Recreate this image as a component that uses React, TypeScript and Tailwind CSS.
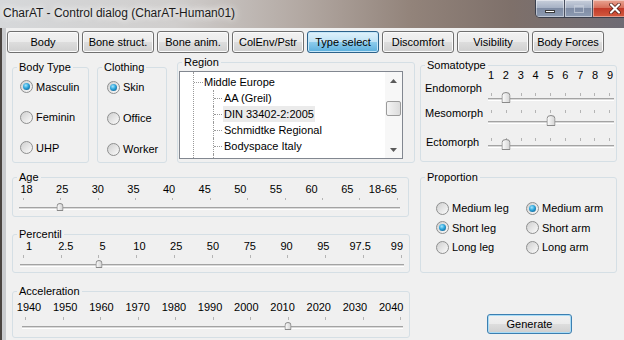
import React from 'react'

const tabs = ['Body', 'Bone struct.', 'Bone anim.', 'ColEnv/Pstr', 'Type select', 'Discomfort', 'Visibility', 'Body Forces']

const treeItems = ['AA (Greil)', 'DIN 33402-2:2005', 'Schmidtke Regional', 'Bodyspace Italy', 'DIN 33402 Italy']

function Radio({ checked }: { checked?: boolean }) {
  return (
    <span className="flex h-[13px] w-[13px] shrink-0 items-center justify-center rounded-full border border-[#8e8f8f] bg-[linear-gradient(135deg,#cfcfcf,#fbfbfb)]">
      {checked && (
        <span className="h-[7px] w-[7px] rounded-full bg-[radial-gradient(circle_at_40%_35%,#a6e6fc_0%,#2aa3da_45%,#0c4a78_100%)]" />
      )}
    </span>
  )
}

function RadioItem({ label, checked, className = '' }: { label: string; checked?: boolean; className?: string }) {
  return (
    <div className={'flex h-[14px] items-center gap-[3px] leading-[14px] ' + className}>
      <Radio checked={checked} />
      <span>{label}</span>
    </div>
  )
}

function Group({
  title,
  className,
  legend = 'leading-[12px]',
  children,
}: {
  title: string
  className: string
  legend?: string
  children?: React.ReactNode
}) {
  return (
    <fieldset className={'rounded-[3px] border border-[#d5dfe5] ' + className}>
      <legend className={'ml-[4px] px-[2px] ' + legend}>{title}</legend>
      {children}
    </fieldset>
  )
}

function Thumb({ big }: { big?: boolean }) {
  if (big) {
    return (
      <svg width="9" height="11" viewBox="0 0 9 11">
        <defs>
          <linearGradient id="tb" x1="0" x2="1" y1="0" y2="0">
            <stop offset="0" stopColor="#fdfdfd" />
            <stop offset="1" stopColor="#d4d4d4" />
          </linearGradient>
        </defs>
        <path d="M0.5 10.5V3.5Q0.5 0.5 4.5 0.5Q8.5 0.5 8.5 3.5V10.5Z" fill="url(#tb)" stroke="#8a8a8a" />
      </svg>
    )
  }
  return (
    <svg width="7" height="8" viewBox="0 0 7 8">
      <defs>
        <linearGradient id="ts" x1="0" x2="1" y1="0" y2="0">
          <stop offset="0" stopColor="#fdfdfd" />
          <stop offset="1" stopColor="#d0d0d0" />
        </linearGradient>
      </defs>
      <path d="M0.5 7.5V3Q0.5 0.5 3.5 0.5Q6.5 0.5 6.5 3V7.5Z" fill="url(#ts)" stroke="#8a8a8a" />
    </svg>
  )
}

function Labels({ items, className }: { items: string[]; className: string }) {
  return (
    <div className={'flex justify-between ' + className}>
      {items.map((t) => (
        <div key={t} className="flex w-0 justify-center whitespace-nowrap">
          {t}
        </div>
      ))}
    </div>
  )
}

function Trackbar(props: {
  count: number
  value: number
  className: string
  tickH: string
  trackClass: string
  thumbClass: string
  big?: boolean
}) {
  const ticks = Array.from({ length: props.count })
  return (
    <div className={'relative ' + props.className}>
      <div className={'flex justify-between ' + props.tickH}>
        {ticks.map((_, i) => (
          <div key={i} className="h-full w-px bg-[#b4b4b4]" />
        ))}
      </div>
      <div className={'h-[3px] border-t border-b border-t-[#a3a3a3] border-b-white bg-[#dadada] ' + props.trackClass} />
      <div
        className={'absolute flex -translate-x-1/2 ' + props.thumbClass}
        style={{ left: `${(props.value / (props.count - 1)) * 100}%` }}
      >
        <Thumb big={props.big} />
      </div>
    </div>
  )
}

function WinButton({ label, active }: { label: string; active?: boolean }) {
  return (
    <div
      className={
        'flex h-[22px] w-[72px] items-center justify-center rounded-[3px] border leading-[14px] ' +
        (active
          ? 'border-[#2c628b] bg-[linear-gradient(#e0f2fb_0%,#bfe2f5_48%,#8ccbec_52%,#5aaedc_100%)] shadow-[inset_0_0_0_1px_#c5e7f9]'
          : 'border-[#707070] bg-[linear-gradient(#f2f2f2_0%,#ebebeb_48%,#dddddd_52%,#cfcfcf_100%)] shadow-[inset_0_0_0_1px_#fbfbfb]')
      }
    >
      {label}
    </div>
  )
}

export default function App() {
  return (
    <div className="flex h-[340px] w-[624px] flex-col overflow-hidden bg-[#f0f0f0] font-['Liberation_Sans',Arial,sans-serif] text-[11px] text-black">
      {/* title bar */}
      <div className="flex h-[28px] shrink-0 bg-[linear-gradient(90deg,#d6d8da_0%,#d0cecd_28%,#b3a9a3_48%,#92837a_66%,#7e706a_82%,#6e6b74_100%)]">
        <div className="pl-[3px] pt-[6px] text-[12px] leading-[14px] text-[#1b1b1b] [text-shadow:0_0_6px_#fff,0_0_10px_#fff]">
          CharAT - Control dialog (CharAT-Human01)
        </div>
        <div className="-mr-[13px] ml-auto flex h-[18px] overflow-hidden rounded-bl-[5px] rounded-br-[5px] border border-t-0 border-[#3a3f4c]">
          <div className="flex w-[29px] items-center justify-center border-r border-[#4a5060] bg-[linear-gradient(#c8cfdb_0%,#a7b2c5_45%,#7f8ca4_50%,#8d9bb2_100%)] shadow-[inset_0_0_0_1px_rgba(255,255,255,0.45)]">
            <div className="mt-[5px] h-[3px] w-[10px] border border-[#3b3b3b] bg-white" />
          </div>
          <div className="flex w-[28px] items-center justify-center border-r border-[#4a5060] bg-[linear-gradient(#c8cfdb_0%,#a7b2c5_45%,#7f8ca4_50%,#8d9bb2_100%)] shadow-[inset_0_0_0_1px_rgba(255,255,255,0.45)]">
            <div className="h-[8px] w-[10px] border border-t-2 border-[#c9d0db] opacity-70" />
          </div>
          <div className="flex w-[43px] items-center justify-center bg-[linear-gradient(#e9a493_0%,#d7705c_45%,#c23b2a_50%,#d45a3f_100%)] shadow-[inset_0_0_0_1px_rgba(255,255,255,0.4)]">
            <svg width="12" height="11" viewBox="0 0 12 11">
              <path d="M2 1.5L10 9.5M10 1.5L2 9.5" stroke="#4a1a12" strokeWidth="3.6" strokeLinecap="round" />
              <path d="M2 1.5L10 9.5M10 1.5L2 9.5" stroke="#fff" strokeWidth="2.2" strokeLinecap="round" />
            </svg>
          </div>
        </div>
      </div>

      <div className="flex flex-1">
        {/* left window frame */}
        <div className="w-[6px] shrink-0 border-l-2 border-[#4a4440] bg-[#c9cbce]" />

        {/* client area */}
        <div className="flex-1">
          <div className="ml-[1px] mt-[3px] flex gap-[3px]">
            {tabs.map((t) => (
              <WinButton key={t} label={t} active={t === 'Type select'} />
            ))}
          </div>

          <div className="ml-[6px] mt-[2px] flex">
            {/* left column */}
            <div className="w-[403px]">
              <div className="flex items-start">
                <Group title="Body Type" className="mt-[6px] h-[102px] w-[77px]">
                  <RadioItem label="Masculin" checked className="ml-[7px] mt-[6.5px]" />
                  <RadioItem label="Feminin" className="ml-[7px] mt-[16.5px]" />
                  <RadioItem label="UHP" className="ml-[7px] mt-[16.5px]" />
                </Group>
                <Group title="Clothing" className="ml-[8px] mt-[6px] h-[102px] w-[70px]">
                  <RadioItem label="Skin" checked className="ml-[9px] mt-[7px]" />
                  <RadioItem label="Office" className="ml-[9px] mt-[17px]" />
                  <RadioItem label="Worker" className="ml-[9px] mt-[17px]" />
                </Group>
                <Group title="Region" className="ml-[10px] mt-[1px] h-[107px] w-[238px]">
                  <div className="ml-[1px] mt-[3px] flex h-[88px] w-[224px] border border-[#828790] bg-white">
                    <div className="flex-1 overflow-hidden">
                      <div className="ml-[13px] h-full border-l border-dotted border-[#9a9a9a] pt-[2px]">
                        <div className="flex h-[16px] items-center">
                          <div className="w-[9px] border-t border-dotted border-[#9a9a9a]" />
                          <span className="ml-[1px] leading-[14px]">Middle Europe</span>
                        </div>
                        {treeItems.map((t) => (
                          <div key={t} className="ml-[19px] flex h-[16px] items-center border-l border-dotted border-[#9a9a9a]">
                            <div className="w-[8px] border-t border-dotted border-[#9a9a9a]" />
                            <span
                              className={
                                'ml-[1px] h-[16px] whitespace-nowrap px-[1px] leading-[16px] ' +
                                (t === 'DIN 33402-2:2005' ? 'bg-[#ebebeb]' : '')
                              }
                            >
                              {t}
                            </span>
                          </div>
                        ))}
                      </div>
                    </div>
                    {/* scrollbar */}
                    <div className="flex w-[17px] flex-col items-center bg-[#f7f7f7]">
                      <div className="flex h-[17px] items-center justify-center">
                        <svg width="7" height="4" viewBox="0 0 7 4">
                          <path d="M0 4L3.5 0L7 4Z" fill="#5a5a5a" />
                        </svg>
                      </div>
                      <div className="mt-[12px] h-[15px] w-[15px] rounded-[2px] border border-[#9b9b9b] bg-[linear-gradient(90deg,#f4f4f4,#dcdcdc)]" />
                      <div className="mt-auto flex h-[17px] items-center justify-center">
                        <svg width="7" height="4" viewBox="0 0 7 4">
                          <path d="M0 0L3.5 4L7 0Z" fill="#5a5a5a" />
                        </svg>
                      </div>
                    </div>
                  </div>
                </Group>
              </div>

              <Group title="Age" className="mt-[8px] h-[46px] w-[397px]">
                <Labels
                  items={['18', '25', '30', '35', '40', '45', '50', '55', '60', '65', '18-65']}
                  className="ml-[13.5px] h-[12px] w-[356.5px] leading-[12px]"
                />
                <Trackbar
                  count={11}
                  value={1}
                  className="ml-[9.7px] mt-[3px] w-[375.3px]"
                  tickH="h-[2px]"
                  trackClass="-ml-[3.4px] -mr-[2px] mt-[7px]"
                  thumbClass="-bottom-[1px]"
                />
              </Group>

              <Group title="Percentil" className="mt-[11px] h-[45px] w-[398px]">
                <Labels
                  items={['1', '2.5', '5', '10', '25', '50', '75', '90', '95', '97.5', '99']}
                  className="ml-[16px] h-[12px] w-[368px] leading-[12px]"
                />
                <Trackbar
                  count={11}
                  value={2}
                  className="ml-[9.7px] mt-[3px] w-[379.3px]"
                  tickH="h-[3px]"
                  trackClass="-ml-[2.7px] -mr-[2px] mt-[5.5px]"
                  thumbClass="-bottom-[1.5px]"
                />
              </Group>

              <Group title="Acceleration" className="mt-[12px] h-[53px] w-[398px]">
                <Labels
                  items={['1940', '1950', '1960', '1970', '1980', '1990', '2000', '2010', '2020', '2030', '2040']}
                  className="ml-[16px] mt-[4px] h-[12px] w-[362.3px] leading-[12px]"
                />
                <Trackbar
                  count={11}
                  value={7}
                  className="ml-[12px] mt-[3.7px] w-[376px]"
                  tickH="h-[3px]"
                  trackClass="-ml-[3px] -mr-[2px] mt-[6px]"
                  thumbClass="-bottom-[1px]"
                />
              </Group>
            </div>

            {/* right column */}
            <div className="ml-[5px] w-[197px]">
              <Group title="Somatotype" legend="leading-[10px]" className="mt-[5px] h-[102px] w-[197px]">
                <div className="pl-[4px]">
                  <div className="flex">
                    <div className="w-[66px]" />
                    <Labels items={['1', '2', '3', '4', '5', '6', '7', '8', '9']} className="h-[10px] w-[119px] leading-[10px]" />
                  </div>
                  <div className="mt-[1px] flex h-[25px] items-start">
                    <div className="w-[66px] leading-[14px]">Endomorph</div>
                    <Trackbar
                      count={9}
                      value={1}
                      big
                      className="mt-[11.5px] w-[119px]"
                      tickH="h-[3px]"
                      trackClass="-ml-[3.5px] -mr-[4px] mt-[2px]"
                      thumbClass="-bottom-[2px]"
                    />
                  </div>
                  <div className="flex h-[28.5px] items-start">
                    <div className="w-[66px] leading-[14px]">Mesomorph</div>
                    <Trackbar
                      count={9}
                      value={4}
                      big
                      className="mt-[4px] w-[119px]"
                      tickH="h-[3px]"
                      trackClass="-ml-[3.5px] -mr-[4px] mt-[8px]"
                      thumbClass="-bottom-[2px]"
                    />
                  </div>
                  <div className="flex items-start">
                    <div className="w-[66px] pl-[1px] leading-[14px]">Ectomorph</div>
                    <Trackbar
                      count={9}
                      value={1}
                      big
                      className="mt-[3px] w-[119px]"
                      tickH="h-[3px]"
                      trackClass="-ml-[3.5px] -mr-[4px] mt-[4px]"
                      thumbClass="-bottom-[2px]"
                    />
                  </div>
                </div>
              </Group>

              <Group title="Proportion" className="mt-[9px] h-[102px] w-[197px]">
                <div className="ml-[15px] mt-[18px] grid grid-cols-[90px_auto] gap-y-[5.5px]">
                  <RadioItem label="Medium leg" />
                  <RadioItem label="Medium arm" checked />
                  <RadioItem label="Short leg" checked />
                  <RadioItem label="Short arm" />
                  <RadioItem label="Long leg" />
                  <RadioItem label="Long arm" />
                </div>
              </Group>

              <div className="ml-[67px] mt-[41px] flex h-[20px] w-[85px] items-center justify-center rounded-[3px] border border-[#3c7fb1] bg-[linear-gradient(#f2f2f2_0%,#ebebeb_48%,#dddddd_52%,#cfcfcf_100%)] leading-[14px] shadow-[inset_0_0_0_1px_#a9dcf6]">
                Generate
              </div>
            </div>
          </div>
        </div>
      </div>
    </div>
  )
}
